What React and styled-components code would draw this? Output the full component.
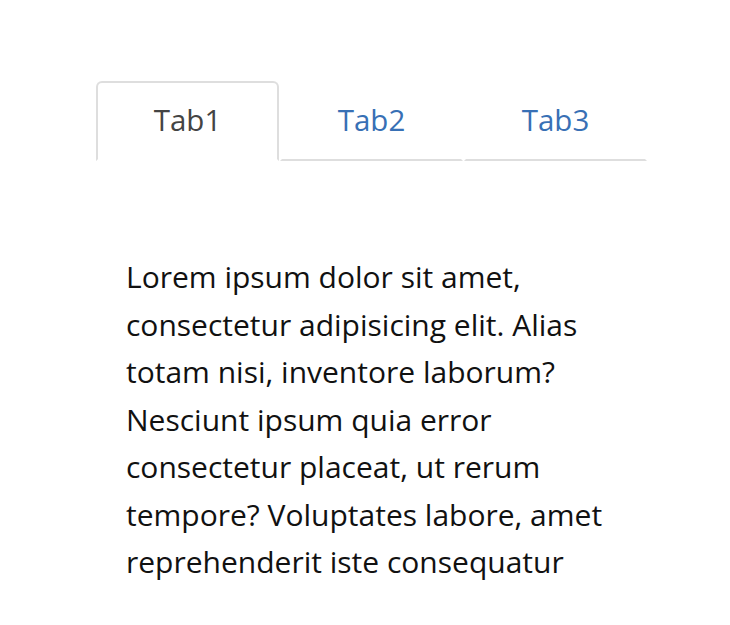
import React, { useState } from "react";
import styled, { createGlobalStyle } from "styled-components";

const GlobalStyle = createGlobalStyle`
    body {
        margin: 0;
        background: #fff;
        font-family: "Open Sans", "Noto Sans", sans-serif;
    }
`;

const Page = styled.div`
    padding: 81px 0 0 96px;
`;

const TabWrap = styled.div`
    width: 551px;
`;

const TabList = styled.div`
    display: flex;
    gap: 1px;
`;

const Tab = styled.button`
    flex: 1;
    height: 80px;
    box-sizing: border-box;
    background: #fff;
    font-family: inherit;
    font-size: 29.5px;
    color: ${({ $active }) => ($active ? "#444" : "#3870b5")};
    border: 2px solid ${({ $active }) => ($active ? "#dedede" : "transparent")};
    border-bottom: 2px solid ${({ $active }) => ($active ? "transparent" : "#dedede")};
    border-radius: ${({ $active }) => ($active ? "6px 6px 0 0" : "0")};
    padding: 0 0 4px 0;
    cursor: pointer;
`;

const Panel = styled.div`
    padding: 92px 30px 0;
    font-size: 30px;
    line-height: 47.5px;
    color: #111;
`;

const tabs = [
    {
        label: "Tab1",
        text: "Lorem ipsum dolor sit amet, consectetur adipisicing elit. Alias totam nisi, inventore laborum? Nesciunt ipsum quia error consectetur placeat, ut rerum tempore? Voluptates labore, amet reprehenderit iste consequatur",
    },
    { label: "Tab2", text: "Tab2 content" },
    { label: "Tab3", text: "Tab3 content" },
];

const App = () => {
    const [current, setCurrent] = useState(0);
    return (
        <>
            <GlobalStyle />
            <Page>
                <TabWrap>
                    <TabList>
                        {tabs.map((t, i) => (
                            <Tab key={t.label} $active={i === current} onClick={() => setCurrent(i)}>
                                {t.label}
                            </Tab>
                        ))}
                    </TabList>
                    <Panel>{tabs[current].text}</Panel>
                </TabWrap>
            </Page>
        </>
    );
};

export default App;
